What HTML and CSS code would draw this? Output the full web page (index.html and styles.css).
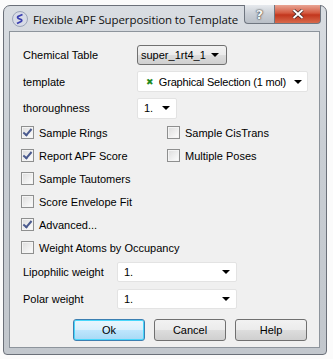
FILE: index.html
```html
<!DOCTYPE html>
<html lang="en">
<head>
  <meta charset="UTF-8">
  <meta name="viewport" content="width=device-width, initial-scale=1.0">
  <title>Flexible APF Superposition to Template</title>
  <link rel="stylesheet" href="styles.css">
</head>
<body>
  <div class="window">
    <div class="titlebar">
      <span class="app-icon">
        <svg width="16" height="16" viewBox="0 0 16 16">
          <circle cx="8" cy="8" r="7.5" fill="#d7dbe6" stroke="#9aa3b8"/>
          <path d="M10.5 3.5 L6 5.5 Q5 6.5 6.5 7.5 L9 8.5 Q10.5 9.5 9 10.5 L5 12.5" fill="none" stroke="#3a3fb0" stroke-width="1.8"/>
        </svg>
      </span>
      <span class="title">Flexible APF Superposition to Template</span>
      <div class="caption-buttons">
        <span class="cap-btn help-btn">?</span>
        <span class="cap-btn close-btn">
          <svg width="12" height="10" viewBox="0 0 12 10">
            <path d="M1.5 1 L10.5 9 M10.5 1 L1.5 9" stroke="#3b2020" stroke-width="3.4"/>
            <path d="M1.5 1 L10.5 9 M10.5 1 L1.5 9" stroke="#fff" stroke-width="2"/>
          </svg>
        </span>
      </div>
    </div>

    <div class="client">
      <div class="row row-table">
        <label class="label">Chemical Table</label>
        <div class="button-combo">super_1rt4_1 <span class="arrow"></span></div>
      </div>

      <div class="row row-template">
        <label class="label">template</label>
        <div class="combo combo-template">
          <span class="green-x">&#x2716;</span>
          <span class="combo-text">Graphical Selection (1 mol)</span>
          <span class="arrow"></span>
        </div>
      </div>

      <div class="row row-thorough">
        <label class="label">thoroughness</label>
        <div class="combo combo-small">
          <span class="combo-text">1.</span>
          <span class="arrow"></span>
        </div>
      </div>

      <div class="checks">
        <label class="check"><span class="box checked"></span>Sample Rings</label>
        <label class="check"><span class="box"></span>Sample CisTrans</label>
        <label class="check"><span class="box checked"></span>Report APF Score</label>
        <label class="check"><span class="box"></span>Multiple Poses</label>
        <label class="check wide"><span class="box"></span>Sample Tautomers</label>
        <label class="check wide"><span class="box"></span>Score Envelope Fit</label>
        <label class="check wide"><span class="box checked"></span>Advanced...</label>
        <label class="check wide"><span class="box"></span>Weight Atoms by Occupancy</label>
      </div>

      <div class="row row-weight">
        <label class="label">Lipophilic weight</label>
        <div class="combo combo-weight">
          <span class="combo-text">1.</span>
          <span class="arrow"></span>
        </div>
      </div>

      <div class="row row-weight row-polar">
        <label class="label">Polar weight</label>
        <div class="combo combo-weight">
          <span class="combo-text">1.</span>
          <span class="arrow"></span>
        </div>
      </div>

      <div class="buttons">
        <button class="btn default">Ok</button>
        <button class="btn">Cancel</button>
        <button class="btn">Help</button>
      </div>
    </div>
  </div>
</body>
</html>
```

FILE: styles.css
```css
body {
  margin: 0;
  background-color: #fbfbfb;
  font-family: "Liberation Sans", Arial, sans-serif;
  font-size: 11px;
  color: #000;
}

.window {
  margin: 5px 4px 0 3px;
  width: 324px;
  height: 350px;
  box-sizing: border-box;
  border: 1px solid #6b7079;
  border-radius: 7px 7px 4px 4px;
  background: linear-gradient(to bottom, #d9dde2 0%, #c9ced4 40%, #c2c7cd 100%);
  padding: 0 6px 6px 5px;
  display: flex;
  flex-direction: column;
}

.titlebar {
  height: 25px;
  display: flex;
  align-items: center;
  position: relative;
}

.app-icon {
  width: 16px;
  height: 16px;
  margin: 1px 5px 0 3px;
}

.title {
  font-family: "Open Sans", sans-serif;
  font-size: 11.5px;
  color: #111;
  margin-top: 2px;
  letter-spacing: -0.1px;
}

.caption-buttons {
  position: absolute;
  top: -1px;
  right: -1px;
  display: flex;
}

.cap-btn {
  height: 19px;
  display: flex;
  align-items: center;
  justify-content: center;
  border: 1px solid #6f7680;
  border-top: none;
  box-sizing: border-box;
}

.help-btn {
  width: 30px;
  border-radius: 0 0 0 4px;
  border-right: none;
  background: linear-gradient(to bottom, #e6e9ed 0%, #c9ced5 50%, #b9bfc7 100%);
  font-family: "DejaVu Sans", sans-serif;
  font-weight: bold;
  font-size: 13px;
  color: #f4f4f4;
  text-shadow: 0 0 2px #333, 0 0 1px #333;
}

.close-btn {
  width: 47px;
  border-radius: 0 0 4px 0;
  background: linear-gradient(to bottom, #e8a493 0%, #d4593f 45%, #c2361d 55%, #d86a4c 100%);
}

.client {
  flex: 1;
  background-color: #f0f0f0;
  border: 1px solid #8d949c;
  padding: 13px 0 0 13px;
}

.row {
  display: flex;
  align-items: center;
}

.label {
  width: 114px;
  flex-shrink: 0;
}

.row-table {
  height: 20px;
}

.row-template {
  height: 21px;
  margin-top: 6px;
}

.row-thorough {
  height: 20px;
  margin-top: 6px;
}

.button-combo {
  width: 90px;
  height: 20px;
  box-sizing: border-box;
  border: 1px solid #707070;
  border-radius: 3px;
  background: linear-gradient(to bottom, #f2f2f2 0%, #ebebeb 50%, #dddddd 51%, #cfcfcf 100%);
  display: flex;
  align-items: center;
  justify-content: space-between;
  padding: 0 7px 0 3px;
  white-space: nowrap;
}

.combo {
  height: 21px;
  box-sizing: border-box;
  background-color: #fff;
  border: 1px solid #e3e3e3;
  border-radius: 2px;
  display: flex;
  align-items: center;
  padding: 0 6px 0 6px;
  white-space: nowrap;
}

.combo-text {
  flex: 1;
}

.combo-template {
  width: 171px;
  padding-right: 5px;
  letter-spacing: -0.2px;
}

.combo-small {
  width: 40px;
}

.green-x {
  color: #1f8a1f;
  font-size: 9px;
  margin: 0 5px 0 2px;
}

.arrow {
  width: 0;
  height: 0;
  border-left: 4px solid transparent;
  border-right: 4px solid transparent;
  border-top: 4px solid #000;
}

.checks {
  display: grid;
  grid-template-columns: 146px 1fr;
  grid-auto-rows: 23px;
  margin-top: 3px;
  margin-left: -2px;
}

.check {
  display: flex;
  align-items: center;
  height: 23px;
}

.check.wide {
  grid-column: 1 / 3;
}

.box {
  width: 13px;
  height: 13px;
  box-sizing: border-box;
  border: 1px solid #8e8f8f;
  background: linear-gradient(135deg, #dcdcdc 0%, #f4f4f4 70%, #fefefe 100%);
  box-shadow: inset 0 0 0 1px #f4f4f4;
  margin-right: 5px;
  position: relative;
}

.box.checked::after {
  content: "";
  position: absolute;
  left: 3px;
  top: 0;
  width: 3px;
  height: 7px;
  border-right: 2px solid #4a5a8e;
  border-bottom: 2px solid #4a5a8e;
  transform: rotate(40deg);
}

.row-weight {
  height: 20px;
  margin-top: 3px;
}

.row-weight .label {
  width: 94px;
}

.row-polar {
  margin-top: 7px;
}

.combo-weight {
  width: 120px;
  height: 20px;
}

.buttons {
  display: flex;
  gap: 9px;
  margin-top: 10px;
  margin-left: 50px;
}

.btn {
  width: 72px;
  height: 22px;
  font-family: "Liberation Sans", Arial, sans-serif;
  font-size: 11px;
  border: 1px solid #707070;
  border-radius: 3px;
  background: linear-gradient(to bottom, #f2f2f2 0%, #ebebeb 50%, #dddddd 51%, #cfcfcf 100%);
  padding: 0;
}

.btn.default {
  border-color: #3c7fb1;
  box-shadow: inset 0 0 0 1px #48d7fb;
  background: linear-gradient(to bottom, #eaf6fd 0%, #d9f0fc 50%, #bee6fd 51%, #a7d9f5 100%);
}
```
